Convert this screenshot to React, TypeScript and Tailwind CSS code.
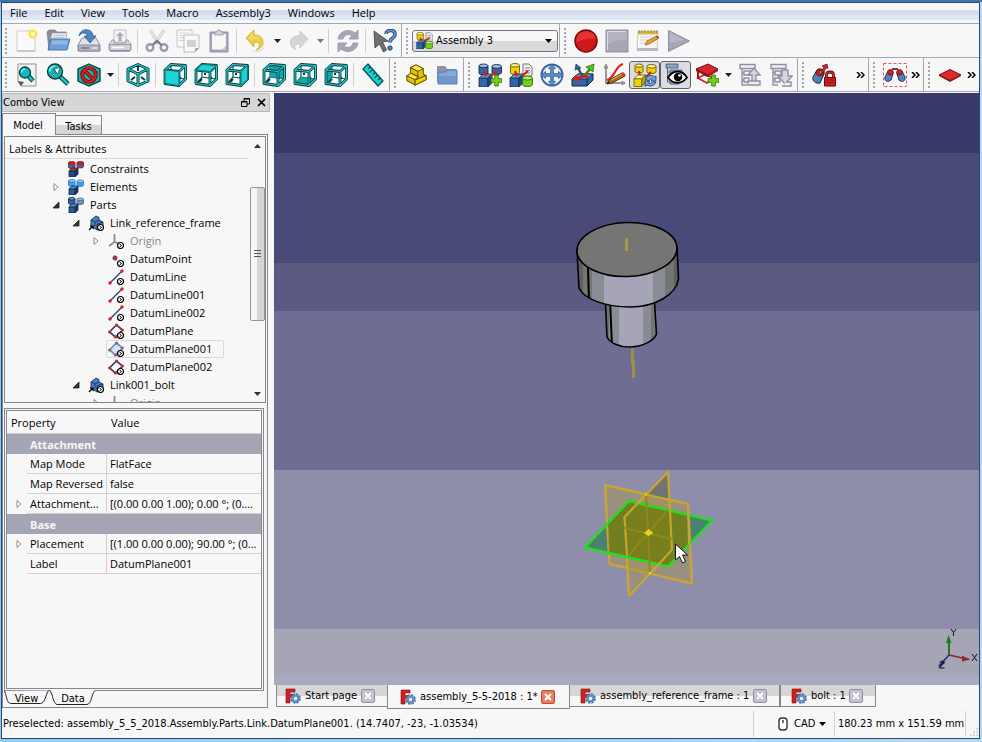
import type { ReactNode } from "react";

const SEGOE = "font-['Open_Sans','Noto_Sans',sans-serif]";
const TAHOMA = "font-['DejaVu_Sans_Condensed','DejaVu_Sans',sans-serif]";

/* ---------- shared icon pieces ---------- */

function Svg({ children, className = "size-6" }: { children: ReactNode; className?: string }) {
  return (
    <svg viewBox="0 0 24 24" className={`${className} shrink-0`} aria-hidden="true">
      {children}
    </svg>
  );
}

function Cyl({ x, y, w, h, fill, top, stroke = "#12294a" }: { x: number; y: number; w: number; h: number; fill: string; top: string; stroke?: string }) {
  const r = w / 2;
  const e = w / 5;
  return (
    <g stroke={stroke} strokeWidth="0.9">
      <path d={`M${x} ${y + e}V${y + h - e}A${r} ${e} 0 0 0 ${x + w} ${y + h - e}V${y + e}Z`} fill={fill} />
      <ellipse cx={x + r} cy={y + e} rx={r} ry={e} fill={top} />
    </g>
  );
}

function Box({ x, y, s, fill, top, side, stroke = "#12294a" }: { x: number; y: number; s: number; fill: string; top: string; side: string; stroke?: string }) {
  const d = s * 0.32;
  return (
    <g stroke={stroke} strokeWidth="0.8" strokeLinejoin="round">
      <path d={`M${x} ${y + d}h${s - d}v${s - d}h${-(s - d)}z`} fill={fill} />
      <path d={`M${x} ${y + d}l${d} ${-d}h${s - d}l${-d} ${d}z`} fill={top} />
      <path d={`M${x + s - d} ${y + d}l${d} ${-d}v${s - d}l${-d} ${d}z`} fill={side} />
    </g>
  );
}

function Plus({ x, y, s = 8 }: { x: number; y: number; s?: number }) {
  const a = s / 3;
  return (
    <path
      d={`M${x + a} ${y}h${a}v${a}h${a}v${a}h${-a}v${a}h${-a}v${-a}h${-a}v${-a}h${a}z`}
      fill="#73d216"
      stroke="#2e6b06"
      strokeWidth="0.8"
    />
  );
}

/* ---------- file toolbar icons ---------- */

const NewIcon = () => (
  <Svg>
    <path d="M2 2h18v20H2z" fill="#fafafa" stroke="#cdcdc8" />
    <path d="M2 22h18" stroke="#a9a9ba" />
    <circle cx="18" cy="5" r="4.6" fill="#f7e64c" />
    <circle cx="18" cy="5" r="2" fill="#fffbd0" />
  </Svg>
);
const OpenIcon = () => (
  <Svg>
    <path d="M1 3l2-2h6l2 2h9v4H5L3 20z" fill="#8a8c99" stroke="#77798a" strokeWidth="0.7" />
    <path d="M6 4h15l-2 10H4z" fill="#e9e9ee" stroke="#a5a5b5" strokeWidth="0.7" />
    <path d="M8 6.500h11M7 8.500h11" stroke="#b7b7c4" strokeWidth="0.8" />
    <path d="M5 10h19l-3 11H2z" fill="#6f9fd6" stroke="#3c6ea9" strokeWidth="0.9" />
    <path d="M6 11.500h16l-1 4H5z" fill="#8fb8e5" />
  </Svg>
);
const SaveIcon = () => (
  <Svg>
    <path d="M5 9h14l4 7v6H1v-6z" fill="#e4e4e8" stroke="#8b8b9d" />
    <path d="M1.500 16h21v6h-21z" fill="#b4b4c2" stroke="#8b8b9d" />
    <path d="M4 19h8" stroke="#7b7b8e" strokeWidth="1.500" />
    <path d="M15 19h5" stroke="#e8e8f0" strokeWidth="1.500" />
    <path d="M2 7C3 2 7 0 11 1c3 .5 5 3 5 6h3l-6 7-6-7h3c0-2-1-3-3-3-2 0-3 1-5 3z" fill="#4f86c0" stroke="#2f6196" strokeWidth="0.8" />
  </Svg>
);
const PrintIcon = () => (
  <Svg>
    <path d="M6 1h12v12H6z" fill="#f4f4f4" stroke="#bdbdc6" />
    <path d="M12 3l4 4h-2.500v5h-3V7H8z" fill="#a9a9ba" />
    <path d="M4 11h2v3h12v-3h2l3 4v6H1v-6z" fill="#dadade" stroke="#9c9cae" />
    <path d="M1.500 15.500h21v6h-21z" fill="#d0d0d8" stroke="#9c9cae" />
    <path d="M4 18.500h12" stroke="#fff" strokeWidth="1.500" />
    <path d="M2 22h20" stroke="#8d8da0" strokeWidth="1.500" />
  </Svg>
);
const CutIcon = () => (
  <Svg>
    <path d="M5 1l9 14M19 1l-9 14" stroke="#c4c4c4" strokeWidth="3" />
    <path d="M5 1l9 14M19 1l-9 14" stroke="#f4f4f4" strokeWidth="1.300" />
    <g fill="none" stroke="#9a9aae" strokeWidth="2.400">
      <circle cx="5" cy="18.500" r="3.300" />
      <circle cx="19" cy="18.500" r="3.300" />
    </g>
    <path d="M7.500 16l4.500-4 4.500 4" fill="none" stroke="#74748a" strokeWidth="2.200" />
  </Svg>
);
const CopyIcon = () => (
  <Svg>
    <path d="M1 1h15v17H1z" fill="#f9f9f9" stroke="#c6c6c6" />
    <path d="M3 4h10M3 6.500h5M3 9h5M3 11.500h5" stroke="#d6d6d6" />
    <path d="M8 6h15v13l-4 4H8z" fill="#f9f9f9" stroke="#bcbcbc" />
    <path d="M11 11h9v7h-9z" fill="#d0d0d0" />
    <path d="M23 19l-4 4v-4z" fill="#a5a5b5" />
  </Svg>
);
const PasteIcon = () => (
  <Svg>
    <path d="M3 3h18v20H3z" fill="#a5a5b8" stroke="#9494aa" />
    <path d="M5 5h14v15.500H5z" fill="#f7f7f7" />
    <path d="M15 20.500l4-4v4z" fill="#c8c8cc" />
    <path d="M8 6V3h2l1-2h2l1 2h2v3z" fill="#d4d4da" stroke="#9494aa" strokeWidth="0.8" />
  </Svg>
);
const UndoIcon = () => (
  <Svg>
    <path d="M7 21c6 2 11 0 13-4 0 4-4 6-8 6z" fill="#d9d9d9" />
    <path d="M2 9l8-8v5c6 0 9 3 9 8 0 3-3 6-7 7 3-2 4-4 3-6-1-2-2-2-5-2v5z" fill="#ecd04a" stroke="#c9a61f" strokeWidth="0.8" strokeLinejoin="round" />
    <path d="M4 9l5-5v3.500c4 0 6 1 7 3-2-1-4-1-7-1v2z" fill="#f3dc62" />
  </Svg>
);
const RedoIcon = () => (
  <Svg>
    <path d="M21 10l-8-8v4.500C6 7 3 10 3.500 14c0 3 2 5 5 7-1-3-1-4 0-5 1-1 2-1 4.500-1v4z" fill="#d4d6d6" stroke="#c3c5c5" strokeWidth="0.8" />
  </Svg>
);
const RefreshIcon = () => (
  <Svg>
    <path d="M2 10C3 4 8 1.500 12 1.500c3 0 5 1 7 2.500l3-3v9h-9l3-3c-4-3-8-1-9 3z" fill="#a5a5b5" stroke="#9595a8" strokeWidth="0.8" />
    <path d="M22 14c-1 6-6 8.500-10 8.500-3 0-5-1-7-2.500l-3 3v-9h9l-3 3c4 3 8 1 9-3z" fill="#a5a5b5" stroke="#9595a8" strokeWidth="0.8" />
  </Svg>
);
const WhatsThisIcon = () => (
  <Svg>
    <path d="M1 2l14 10-5.500 1 4 8-3 2-4-8L2 19z" fill="#6d716c" stroke="#474a47" strokeWidth="0.9" />
    <path d="M13 5c0-3 3-3.500 5-3.500 3 0 4 1.500 4 4 0 4-5 3-5 8" fill="none" stroke="#204a87" strokeWidth="3.600" />
    <path d="M13 5c0-3 3-3.500 5-3.500 3 0 4 1.500 4 4 0 4-5 3-5 8" fill="none" stroke="#6f9bd0" strokeWidth="1.600" />
    <circle cx="17" cy="19" r="2.200" fill="#4d7fb8" stroke="#204a87" />
  </Svg>
);
const AssemblyIcon = ({ plus = false, className }: { plus?: boolean; className?: string }) => (
  <Svg className={className}>
    {plus ? (
      <>
        <Cyl x={1} y={1} w={9} h={11} fill="#3465a4" top="#9dc0e8" />
        <Cyl x={14} y={1.500} w={9.500} h={10} fill="#3465a4" top="#9dc0e8" />
      </>
    ) : (
      <>
        <Cyl x={1.500} y={0.5} w={9} h={11} fill="#edd400" top="#fff29a" stroke="#6b5a00" />
        <path d="M14 1h6l3 3v9h-9z" fill="#f0f0f0" stroke="#777" />
        <path d="M16 5h5M16 7.500h5M16 10h5" stroke="#888" />
      </>
    )}
    <Box x={1} y={11} s={13} fill="#3465a4" top="#5b8cc8" side="#204a87" />
    <path d="M6 8l2 5M19 8l-6 5" stroke="#e01818" strokeWidth="2.200" />
    {plus ? <Plus x={13} y={12} s={11} /> : <Cyl x={13.500} y={13} w={10} h={10.500} fill="#73d216" top="#b4f06a" stroke="#2e6b06" />}
  </Svg>
);
const RecordIcon = () => (
  <Svg>
    <circle cx="12" cy="12" r="11" fill="#d01818" stroke="#7d0a0a" strokeWidth="1.500" />
    <path d="M2.500 13C2 6 6 2.500 12 2.500S21.500 6 21.500 10c-7-1-13 0-19 3z" fill="#e63232" />
  </Svg>
);
const StopIcon = () => (
  <Svg>
    <path d="M1 1h22v22H1z" fill="#a5a5b5" stroke="#8f8fa3" />
    <path d="M2.500 2.500h19V11c-8 0-13 1-19 4z" fill="#b3b3c1" />
    <path d="M2.500 21V2.500H21" fill="none" stroke="#dcdce4" />
  </Svg>
);
const MacroEditIcon = () => (
  <Svg>
    <path d="M2 3h20l-1 17H1z" fill="#f6f6f2" stroke="#c5c5c0" />
    <path d="M1 19h21v3H1z" fill="#b9b9c6" />
    <path d="M2 2h20v3.500H2z" fill="#d8bb53" />
    <path d="M3 1v3M6 1v3M9 1v3M12 1v3M15 1v3M18 1v3M21 1v3" stroke="#8f7b2c" strokeWidth="0.9" />
    <path d="M4 8h14M4 11h12M4 14h8" stroke="#cfcfd0" />
    <path d="M9 16l2-4 10-5 2 2-10 6z" fill="#e7a52c" stroke="#94661b" strokeWidth="0.8" />
    <path d="M19.500 7.500l2-1 1.500 2-1.500 1z" fill="#dd2c2c" />
  </Svg>
);
const PlayIcon = () => (
  <Svg>
    <path d="M1.500 1.500v21L22.500 12z" fill="#a5a5b5" stroke="#8f8fa3" />
    <path d="M2.500 14V3l15 8z" fill="#b6b6c4" />
  </Svg>
);

/* ---------- view toolbar icons ---------- */

const lens = (cx: number, cy: number, r: number, hx: number, hy: number) => (
  <>
    <path d={`M${cx + r * 0.7} ${cy + r * 0.7}L${hx} ${hy}`} stroke="#043b3c" strokeWidth="4.600" />
    <path d={`M${cx + r * 0.7} ${cy + r * 0.7}L${hx} ${hy}`} stroke="#16c4c6" strokeWidth="2.600" />
    <circle cx={cx} cy={cy} r={r} fill="#12b8bb" stroke="#043b3c" strokeWidth="1.300" />
    <path d={`M${cx - r + 2} ${cy}A${r - 2} ${r - 2} 0 0 1 ${cx} ${cy - r + 2}`} stroke="#8df2f2" strokeWidth="1.600" fill="none" />
  </>
);
const FitAllIcon = () => (
  <Svg>
    <path d="M3 1h18v22H6l-3-4z" fill="#f3f3f1" stroke="#8f918d" />
    <path d="M3 18l6 1-3 4z" fill="#555753" />
    {lens(10, 9.500, 5.500, 18, 18)}
  </Svg>
);
const FitSelIcon = () => (
  <Svg>
    {lens(9, 8.500, 7.500, 22, 21)}
    <path d="M5 13l5-5-3-1 7-3-2 7-2-2-4 5z" fill="#fff" stroke="#0b4c4d" strokeWidth="0.7" />
  </Svg>
);
const DrawStyleIcon = () => (
  <Svg>
    <path d="M12 1l11 5v12l-11 5L1 18V6z" fill="#15b4b6" stroke="#043b3c" strokeWidth="1.300" />
    <circle cx="12" cy="12" r="6.800" fill="none" stroke="#5e0707" strokeWidth="3.800" />
    <path d="M7.500 7.500l9 9" stroke="#5e0707" strokeWidth="3.800" />
    <circle cx="12" cy="12" r="6.800" fill="none" stroke="#dd1d1d" strokeWidth="2.200" />
    <path d="M7.500 7.500l9 9" stroke="#dd1d1d" strokeWidth="2.200" />
  </Svg>
);
const AxoIcon = () => (
  <Svg>
    <path d="M12 1l10.500 5v12L12 23 1.500 18V6z" fill="#f6fbfb" />
    <g fill="none" strokeLinejoin="round">
      <path d="M12 1.500l10 4.500v12l-10 4.500L2 18V6zM2 6l10 5 10-5M12 11v11" stroke="#04393a" strokeWidth="3" />
      <path d="M12 1.500l10 4.500v12l-10 4.500L2 18V6zM2 6l10 5 10-5M12 11v11" stroke="#1fd0d2" strokeWidth="1.300" />
    </g>
    <path d="M5 17l4-3M19 17l-4-3M12 4v4" stroke="#04393a" strokeWidth="1.800" />
  </Svg>
);
const FACES: Record<string, string> = {
  front: "M2 7L16 8.500V22.500L2 20.500Z",
  top: "M2 7L8 1.500L22.500 2.500L16 8.500Z",
  right: "M16 8.500L22.500 2.500V16L16 22.500Z",
  rear: "M8 1.500L22.500 2.500V16L8 14Z",
  bottom: "M2 20.500L8 14L22.500 16L16 22.500Z",
  left: "M2 7L8 1.500V14L2 20.500Z",
};
const EDGES = "M2 7L16 8.500V22.500L2 20.500ZM2 7L8 1.500L22.500 2.500L16 8.500M22.500 2.500V16L16 22.500";
const CubeIcon = ({ face }: { face: string }) => {
  const hidden = face === "rear" || face === "bottom" || face === "left";
  return (
    <Svg>
      <path d="M2 7L8 1.500L22.500 2.500V16L16 22.500L2 20.500Z" fill="#f4fafa" />
      <path d="M8 2v12l14 2M8 14l-5 6" fill="none" stroke="#0a5758" strokeWidth="1.200" />
      <path d="M8 16l-3 3M11 12v-2M15 14l3 1" stroke="#04393a" strokeWidth="2" />
      {hidden && <path d={FACES[face]} fill="#12a8aa" />}
      <path d={EDGES} fill="none" stroke="#04393a" strokeWidth="2.800" strokeLinejoin="round" />
      <path d={EDGES} fill="none" stroke="#25cfd1" strokeWidth="1.100" strokeLinejoin="round" />
      {!hidden && <path d={FACES[face]} fill="#1ed3d6" stroke="#0a6a6b" strokeWidth="0.9" />}
    </Svg>
  );
};
const RulerIcon = () => (
  <Svg>
    <path d="M2 6l5-5 15 17-5 5z" fill="#1ccfd2" stroke="#055253" strokeWidth="1.300" strokeLinejoin="round" />
    <path d="M9 4l-2 2M11.500 6.500l-3 3M14 9.500l-2 2M16.500 12l-3 3M19 15l-2 2" stroke="#055253" strokeWidth="1.100" />
  </Svg>
);
const PartIcon = () => (
  <Svg className="size-[22px]">
    <g stroke="#6b5a00" strokeWidth="1.100" strokeLinejoin="round">
      <path d="M6 4l6-3 8 4v6l3 2v4l-12 6-9-5v-5l4-2z" fill="#e0c400" />
      <path d="M6 4l6-3 8 4-6 3z" fill="#fce94f" />
      <path d="M2 13l5-3 8 4-4 3z" fill="#fce94f" />
      <path d="M6 4v6l8 4V8zM20 11l3 2-12 5v5" fill="none" />
      <path d="M11 17.500l12-5V17l-12 6z" fill="#edd400" />
    </g>
  </Svg>
);
const GroupIcon = () => (
  <Svg>
    <path d="M2 3h8l2 3h9v13H2z" fill="#8d93a3" />
    <path d="M3 21V9h7l2-2h10v14z" fill="#7099ca" stroke="#5a84b6" />
    <path d="M4 10h7l2-2h8v5H4z" fill="#84aad8" />
  </Svg>
);
const MoveIcon = () => (
  <Svg>
    <circle cx="12" cy="12" r="10.500" fill="#eef3fa" stroke="#3b69a5" strokeWidth="2" />
    <path d="M12 1.500l3.500 4H13.300v5.200h5.200V8.500l4 3.500-4 3.500v-2.200h-5.200v5.200h2.200L12 22.500l-3.500-4h2.200v-5.200H5.500v2.200l-4-3.500 4-3.500v2.200h5.200V5.500H8.500z" fill="#5f8fca" stroke="#2b558f" strokeWidth="0.800" />
  </Svg>
);
const AxialIcon = () => (
  <Svg>
    <path d="M1 16l6-5h15v6l-6 6H1z" fill="#3465a4" stroke="#12294a" />
    <path d="M1 16l6-5h15l-6 5z" fill="#6b98d0" stroke="#12294a" strokeWidth="0.800" />
    <path d="M16 16v7" stroke="#12294a" />
    <path d="M12 14L7 5" stroke="#204a87" strokeWidth="2.200" />
    <path d="M4 7l1-6 5 4z" fill="#3465a4" stroke="#12294a" strokeWidth="0.600" />
    <path d="M12 14l8-9" stroke="#3a8a10" strokeWidth="2.600" />
    <path d="M15 4l8-3-1 8z" fill="#5ac018" stroke="#1f5a04" strokeWidth="0.700" />
    <path d="M13 13l-9 3M13 13l4 1" stroke="#e01818" strokeWidth="2.400" />
    <path d="M6 12l-5 5 7 1z" fill="#e01818" />
  </Svg>
);
const TraceIcon = () => (
  <Svg>
    <path d="M4 2v18h19" stroke="#777a7d" strokeWidth="1.500" fill="none" />
    <path d="M2 5l2-4 2 4zM20 18l3 2-3 2z" fill="#aaa" stroke="#666" strokeWidth="0.600" />
    <path d="M5 17c8-2 8-14 16-16" stroke="#dd1d1d" strokeWidth="2.200" fill="none" />
    <path d="M5 21l2-4 13-7 3 3L10 20z" fill="#a9701c" stroke="#4e330a" strokeWidth="1" />
    <path d="M9 17l11-6" stroke="#dba24e" strokeWidth="1.200" />
    <path d="M5 21l1-3 2 2z" fill="#222" />
    <path d="M19 10.500l2-1.500 3 3-2 1.500z" fill="#c33" />
  </Svg>
);
const AutoRecomputeIcon = () => (
  <Svg>
    <Cyl x={2} y={1} w={8} h={9} fill="#edd400" top="#fff29a" stroke="#6b5a00" />
    <Cyl x={14} y={1.500} w={9} h={9} fill="#edd400" top="#fff29a" stroke="#6b5a00" />
    <path d="M6 8l1 6M18 9l-6 6" stroke="#e01818" strokeWidth="1.900" />
    <Box x={1} y={12} s={11.500} fill="#edd400" top="#fff29a" side="#c4a000" stroke="#6b5a00" />
    <path d="M12.500 16c1-4 7-5 9-2l1.500-1v5h-5l1.500-1.500c-2-1-3 0-4 1.500z" fill="#729fcf" stroke="#204a87" strokeWidth="0.900" />
    <path d="M23 19c-1 4-7 5-9 3l-2 1.500V18h5l-1.500 2c2 1 3 0 4-1z" fill="#729fcf" stroke="#204a87" strokeWidth="0.900" />
  </Svg>
);
const SmartRecomputeIcon = () => (
  <Svg>
    <path d="M2 1h12v4H2zM6 7h12v4H6zM6 14h9v7H6z" fill="#8da5c4" stroke="#4a5f80" strokeWidth="0.900" />
    <path d="M3.500 5v14H6M3.500 9H6" stroke="#4a5f80" fill="none" />
    <path d="M4 14.500c5-8 14-8 19 0-5 7-14 7-19 0z" fill="#fff" stroke="#000" strokeWidth="1.800" />
    <circle cx="14" cy="14" r="4.300" />
    <circle cx="15.500" cy="12.500" r="1.300" fill="#fff" />
  </Svg>
);
const WorkplaneIcon = () => (
  <Svg>
    <path d="M3 15l6-3 10 3-7 5z" fill="#fff" stroke="#c22" strokeWidth="1.800" />
    <path d="M3 8v8" stroke="#a11" strokeWidth="2" />
    <path d="M1 6l12-5 10 5-10 6z" fill="#d9262b" stroke="#5e0b0d" strokeWidth="0.900" />
    <path d="M1 6v2l12 6V12z" fill="#8d1216" />
    <path d="M13 12v2l10-6V6z" fill="#a8171b" />
    <Plus x={13} y={12} s={11} />
  </Svg>
);
const TreeArrowIcon = ({ down = false }: { down?: boolean }) => (
  <Svg>
    <g fill="#f0f0f4" stroke="#8f8fa3" strokeWidth="1.400">
      <path d="M2 1.500h15v4H2zM6 8h6v4H6zM6 15h5v4H6z" />
      <path d="M4 6v16h5M4 10h2M4 17h2" fill="none" />
      {down ? <path d="M13 7h6v6h4l-7 8-7-8h4z" fill="#d6d6de" /> : <path d="M14 20v-8h-4l6-7 6 7h-4v8z" fill="#d6d6de" />}
      {down ? <path d="M17 19h5v4h-9" /> : <path d="M10 18h12v4H10z" />}
    </g>
  </Svg>
);
const LockIcon = () => (
  <Svg>
    <path d="M1 14l4-7 7 4-4 9c-4 1-8-2-7-6z" fill="#4e82bd" stroke="#12294a" />
    <path d="M5 7c2-3 9 0 7 4l-3 2c-4 0-6-2-4-6z" fill="#d61f1f" stroke="#5e0b0d" strokeWidth="0.900" />
    <circle cx="9" cy="9" r="2" fill="#8cb4e0" stroke="#5e0b0d" />
    <path d="M9 9l3-5-2-1 5-2 1 4-2 0-3 5z" fill="#d61f1f" stroke="#5e0b0d" strokeWidth="0.700" />
    <path d="M14.500 15v-3c0-4 7-4 7 0v3" fill="none" stroke="#5e0b0d" strokeWidth="2.800" />
    <path d="M14.500 15v-3c0-4 7-4 7 0v3" fill="none" stroke="#e33" strokeWidth="1.200" />
    <path d="M12.500 14.500h11v8.500h-11z" fill="#d61f1f" stroke="#5e0b0d" />
    <path d="M14 17h8M14 19.500h8" stroke="#8d1216" />
  </Svg>
);
const CoincidentIcon = () => (
  <Svg>
    <path d="M0.500 0.500h23v23h-23z" fill="none" stroke="#f05050" strokeDasharray="3 2" />
    <path d="M2 14l3-6 5 3-2 6c-3 3-7 1-6-3zM22 14l-3-6-5 3 2 6c3 3 7 1 6-3z" fill="#4e82bd" stroke="#12294a" strokeWidth="0.900" />
    <path d="M5 8c1-3 7-1 5 3l-2 1c-3 0-4-2-3-4zM19 8c-1-3-7-1-5 3l2 1c3 0 4-2 3-4z" fill="#d61f1f" stroke="#5e0b0d" strokeWidth="0.800" />
    <path d="M9 6h6" stroke="#5e0b0d" strokeWidth="1.600" />
  </Svg>
);
const RedPlaneIcon = () => (
  <Svg>
    <path d="M1 12l11-5.500L23 12l-11 5.500z" fill="#e02a2a" stroke="#6d0b0b" />
    <path d="M1 12l11 5.500L23 12v1l-11 6L1 13z" fill="#8d1216" />
  </Svg>
);

/* ---------- toolbar parts ---------- */

function Group({ children, className = "pl-1" }: { children: ReactNode; className?: string }) {
  return (
    <div role="toolbar" className={`flex h-full shrink-0 items-center border-[#a5a5b5] pr-px not-last:border-r ${className}`}>
      <span className="mr-1 h-[26px] w-[2px] shrink-0 bg-[repeating-linear-gradient(to_bottom,#a5a5b5_0px,#a5a5b5_2px,transparent_2px,transparent_4px)]" />
      {children}
    </div>
  );
}
function Tool({ label, children, pressed }: { label: string; children: ReactNode; pressed?: boolean }) {
  return (
    <button
      type="button"
      aria-label={label}
      aria-pressed={pressed}
      className={`flex h-7 w-[31px] shrink-0 items-center justify-center rounded-[3px] ${pressed ? "border border-[#5f6068] bg-[#dcdce0]" : ""}`}
    >
      {children}
    </button>
  );
}
function Caret({ label, faded }: { label: string; faded?: boolean }) {
  return (
    <button type="button" aria-label={label} className="flex h-7 w-3 shrink-0 items-center justify-center">
      <svg viewBox="0 0 7 4" className="h-1 w-[7px]">
        <path d="M0 0h7L3.500 4z" fill={faded ? "#777" : "#222"} />
      </svg>
    </button>
  );
}
const Sep = () => <span className="mr-[3px] ml-[2px] h-6 w-px shrink-0 bg-[#d0d0d0]" />;
function More({ label }: { label: string }) {
  return (
    <button type="button" aria-label={label} className="mr-px ml-auto flex h-7 w-[10px] items-center">
      <svg viewBox="0 0 9 6" className="h-[6px] w-[9px]">
        <path d="M1 0l3 3-3 3M5 0l3 3-3 3" fill="none" stroke="#000" strokeWidth="1.500" />
      </svg>
    </button>
  );
}

/* ---------- tree ---------- */

const badge = (
  <>
    <circle cx="12.500" cy="12.500" r="3" fill="#fff" stroke="#000" strokeWidth="1.200" />
    <path d="M11.500 11l2 1.500-2 1.500" fill="none" stroke="#000" />
  </>
);
function TreeIcon({ kind }: { kind: string }) {
  return (
    <svg viewBox="0 0 16 16" className="size-4 shrink-0" aria-hidden="true">
      {kind === "constraints" && (
        <>
          <Cyl x={0.5} y={0.5} w={6.500} h={7} fill="#3465a4" top="#c22" stroke="#b01515" />
          <Cyl x={9} y={0.5} w={6.500} h={6.500} fill="#3465a4" top="#c22" stroke="#b01515" />
          <Box x={1} y={7} s={9} fill="#204a87" top="#d22" side="#163560" />
        </>
      )}
      {kind === "elements" && (
        <>
          <Cyl x={0.5} y={0.5} w={6.500} h={7} fill="#3aa0f5" top="#8fd0ff" stroke="#3a7fc0" />
          <Cyl x={9} y={1} w={6.500} h={6.500} fill="#3aa0f5" top="#8fd0ff" stroke="#3a7fc0" />
          <Box x={1} y={7} s={9} fill="#2a5a96" top="#5b8cc8" side="#163560" />
        </>
      )}
      {kind === "parts" && (
        <>
          <Cyl x={0.5} y={0.5} w={6.500} h={7} fill="#3465a4" top="#6d9bd0" />
          <Cyl x={9} y={1} w={6.500} h={6.500} fill="#6f94c2" top="#a7c2e2" stroke="#476b97" />
          <Box x={1} y={7} s={9} fill="#2a5a96" top="#5b8cc8" side="#163560" />
        </>
      )}
      {kind === "link" && (
        <>
          <path d="M3 5l5-4 3 1.500V5l4 2v5l-6 3-6-4z" fill="#4a7cb6" stroke="#163560" strokeWidth="0.900" />
          <path d="M3 5l4 2v4M7 7l4-2M9 9v6M9 9l6-2" fill="none" stroke="#163560" strokeWidth="0.900" />
          <path d="M0 10h6v6H0z" fill="#fff" />
          <path d="M1 15l4-4M2 11h3.200v3.200" fill="none" stroke="#000" strokeWidth="1.300" />
          {badge}
        </>
      )}
      {kind === "origin" && (
        <>
          <path d="M6.500 1v8L1 13M6.500 9l6 2" fill="none" stroke="#8a8c99" strokeWidth="1.800" />
          {badge}
        </>
      )}
      {kind === "point" && (
        <>
          <circle cx="7" cy="7" r="2.200" fill="#c22233" stroke="#4a5f80" strokeWidth="0.800" />
          {badge}
        </>
      )}
      {kind === "line" && (
        <>
          <path d="M2 14L14 2" stroke="#2d4a78" strokeWidth="1.500" />
          <circle cx="2" cy="14" r="1.700" fill="#d22" />
          <circle cx="14" cy="2" r="1.700" fill="#d22" />
          {badge}
        </>
      )}
      {kind.startsWith("plane") && (
        <>
          <path d="M8.500 2L14.500 7 7.500 14 1.500 9z" fill={kind === "plane-hot" ? "#d9e6f7" : "#fff"} stroke={kind === "plane-hot" ? "#6f93c0" : "#2d4a78"} strokeWidth="1.700" />
          <g fill={kind === "plane-hot" ? "#a05a78" : "#d22"}>
            <circle cx="8.500" cy="2" r="1.600" />
            <circle cx="14.300" cy="7" r="1.600" />
            <circle cx="7.500" cy="14" r="1.600" />
            <circle cx="1.700" cy="9" r="1.600" />
          </g>
          {badge}
        </>
      )}
    </svg>
  );
}
function Twisty({ open }: { open: boolean }) {
  return (
    <svg viewBox="0 0 8 8" className="size-2" aria-hidden="true">
      {open ? <path d="M7 1v6H1z" fill="#333" stroke="#222" strokeWidth="0.800" /> : <path d="M2 0.500v7l4-3.500z" fill="#fff" stroke="#8a8a8a" />}
    </svg>
  );
}
type Node = { label: string; icon: string; indent: string; open?: boolean; dim?: boolean; hot?: boolean };
const L1 = "pl-[47px]";
const L2 = "pl-[67px]";
const L3 = "pl-[87px]";
const NODES: Node[] = [
  { label: "Constraints", icon: "constraints", indent: L1 },
  { label: "Elements", icon: "elements", indent: L1, open: false },
  { label: "Parts", icon: "parts", indent: L1, open: true },
  { label: "Link_reference_frame", icon: "link", indent: L2, open: true },
  { label: "Origin", icon: "origin", indent: L3, open: false, dim: true },
  { label: "DatumPoint", icon: "point", indent: L3 },
  { label: "DatumLine", icon: "line", indent: L3 },
  { label: "DatumLine001", icon: "line", indent: L3 },
  { label: "DatumLine002", icon: "line", indent: L3 },
  { label: "DatumPlane", icon: "plane", indent: L3 },
  { label: "DatumPlane001", icon: "plane-hot", indent: L3, hot: true },
  { label: "DatumPlane002", icon: "plane", indent: L3 },
  { label: "Link001_bolt", icon: "link", indent: L2, open: true },
  { label: "Origin", icon: "origin", indent: L3, open: false, dim: true },
];

/* ---------- properties ---------- */

type Prop = { name: string; value?: string; expandable?: boolean };
const PROPS: Prop[] = [
  { name: "Attachment" },
  { name: "Map Mode", value: "FlatFace" },
  { name: "Map Reversed", value: "false" },
  { name: "Attachment...", value: "[(0.00 0.00 1.00); 0.00 °; (0....", expandable: true },
  { name: "Base" },
  { name: "Placement", value: "[(1.00 0.00 0.00); 90.00 °; (0...", expandable: true },
  { name: "Label", value: "DatumPlane001" },
];

function PropertyTable() {
  return (
    <table className={`w-full table-fixed border-separate border-spacing-0 text-[11px] leading-[19px] ${SEGOE}`}>
      <colgroup>
        <col className="w-5" />
        <col className="w-20" />
        <col />
      </colgroup>
      <thead>
        <tr className="h-[23px] text-left">
          <th colSpan={2} className="border-b border-[#d0d0d0] pl-1 font-normal">Property</th>
          <th className="border-b border-[#d0d0d0] pl-1 font-normal">Value</th>
        </tr>
      </thead>
      <tbody>
        {PROPS.map((p) =>
          p.value === undefined ? (
            <tr key={p.name} className="h-5 bg-[#a5a5b5] text-left text-[#f7f7f7]">
              <td />
              <th colSpan={2} className="pl-[3px] font-bold">{p.name}</th>
            </tr>
          ) : (
            <tr key={p.name} className="h-5 whitespace-nowrap">
              <td className="pl-2">{p.expandable && <Twisty open={false} />}</td>
              <td className="border-r border-b border-[#d0d0d0] pl-[3px]">{p.name}</td>
              <td className="border-b border-[#d0d0d0] pl-[3px]">{p.value}</td>
            </tr>
          ),
        )}
      </tbody>
    </table>
  );
}

function SidePanel() {
  return (
    <aside className="flex w-[268px] shrink-0 flex-col pb-px">
      <header className={`flex h-[19px] items-center border border-[#b9b9bb] bg-[#d6d6d6] text-[11px] ${TAHOMA}`}>
        <h2 className="flex-1 pt-[2px]">Combo View</h2>
        <button type="button" aria-label="Float panel" className="flex w-4 justify-center">
          <svg viewBox="0 0 9 9" className="size-[9px]">
            <path d="M3 3V.5h5.500V6H6M3 1h5.500M.5 3.500H6v5H.5zM.5 4H6" fill="none" stroke="#000" />
          </svg>
        </button>
        <button type="button" aria-label="Close panel" className="flex w-4 justify-center">
          <svg viewBox="0 0 9 9" className="size-[9px]">
            <path d="M1 1l7 7M8 1L1 8" stroke="#000" strokeWidth="1.700" />
          </svg>
        </button>
      </header>

      <div role="tablist" className={`mt-px flex items-end text-[11px] ${TAHOMA}`}>
        <button type="button" role="tab" aria-selected="true" className="z-10 -mb-px h-[22px] w-[54px] border border-b-0 border-[#85868f] bg-[#f7f7f7] pt-[3px] pr-[2px]">
          Model
        </button>
        <button type="button" role="tab" aria-selected="false" className="h-[19px] w-[46px] border border-b-0 border-l-0 border-[#85868f] bg-linear-to-b from-[#f7f7f7] from-50% to-[#d6d6d6] to-50% pt-[3px]">
          Tasks
        </button>
      </div>

      <div className="mr-[2px] flex min-h-0 flex-1 flex-col border border-[#85868f] pt-px pr-px pl-px">
        <section aria-label="Model tree" className={`flex h-[267px] shrink-0 border border-[#85868f] text-[11px] ${SEGOE}`}>
          <div className="flex min-w-0 flex-1 flex-col overflow-hidden">
            <div className="mb-px h-[22px] shrink-0 border-b border-[#d9d9dc] pl-1 leading-[23px]">Labels &amp; Attributes</div>
            <ul role="tree" aria-label="Labels and Attributes" className="min-h-0 flex-1 overflow-hidden">
              {NODES.map((n, i) => (
                <li key={i} role="treeitem" aria-expanded={n.open} className={`flex h-[18px] items-center leading-[18px] ${n.indent}`}>
                  <span className="w-[14px] shrink-0">{n.open !== undefined && <Twisty open={n.open} />}</span>
                  <span className={`flex h-[18px] items-center gap-[6px] pr-3 pl-[2px] ${n.hot ? "rounded-[2px] ring-1 ring-[#dadada] ring-inset" : ""}`}>
                    <TreeIcon kind={n.icon} />
                    <span className={n.dim ? "text-[#858585]" : ""}>{n.label}</span>
                  </span>
                </li>
              ))}
            </ul>
          </div>
          <div className="flex w-4 shrink-0 flex-col items-center pt-[7px] pb-[6px]">
            <button type="button" aria-label="Scroll up">
              <svg viewBox="0 0 7 4" className="h-1 w-[7px]"><path d="M0 4h7L3.500 0z" fill="#333" /></svg>
            </button>
            <div className="mt-[39px] flex h-[134px] w-[15px] items-center justify-center rounded-[2px] border border-[#95959c] bg-linear-to-r from-[#f7f7f7] from-50% to-[#d6d6d6] to-50%">
              <span className="h-[9px] w-[7px] bg-[repeating-linear-gradient(to_bottom,#555_0px,#555_1px,transparent_1px,transparent_3px)]" />
            </div>
            <button type="button" aria-label="Scroll down" className="mt-auto">
              <svg viewBox="0 0 7 4" className="h-1 w-[7px]"><path d="M0 0h7L3.500 4z" fill="#333" /></svg>
            </button>
          </div>
        </section>

        <section aria-label="Properties" className="mt-[5px] mr-[2px] flex min-h-0 flex-1 flex-col border border-[#85868f] p-px">
          <div className="flex-1 border border-[#85868f]">
            <PropertyTable />
          </div>
        </section>

        <div role="tablist" className={`relative -mt-px flex h-[17px] shrink-0 text-[11px] leading-[13px] ${TAHOMA}`}>
          <svg viewBox="0 0 94 16" className="absolute top-0 left-0 h-4 w-[94px]" aria-hidden="true">
            <path d="M46 .5h45" stroke="#f7f7f7" />
            <path d="M.5 1c2 4 2 12 6 12.500h30c5-.5 5-9 8-13M46 .5c3 4 3 13 7 14h30c5-1 4-10 8-14" fill="#f7f7f7" stroke="#222" />
          </svg>
          <button type="button" role="tab" aria-selected="false" className="relative w-[45px]">View</button>
          <button type="button" role="tab" aria-selected="true" className="relative w-[48px]">Data</button>
        </div>
      </div>
    </aside>
  );
}

/* ---------- 3D view ---------- */

function Viewport() {
  return (
    <div className="relative min-h-0 flex-1 overflow-hidden">
      <div className="flex h-full flex-col" aria-hidden="true">
        <div className="grow-[60] bg-[#393969]" />
        <div className="grow-[110] bg-[#4a4a78]" />
        <div className="grow-[48] bg-[#5a5a82]" />
        <div className="grow-[159] bg-[#6e6e94]" />
        <div className="grow-[159] bg-[#8e8eab]" />
        <div className="grow-[47] bg-[#a5a5b5]" />
        <div className="grow-[9] bg-[#a9a9c1]" />
      </div>
      <svg viewBox="274 93 705 592" className="absolute inset-0 size-full" role="img" aria-label="Bolt and datum planes">
        <defs>
          <clipPath id="shaft">
            <path d="M605.500 300L607 337C610 343 619 347 629 347C642 347 654 341 656.500 334L654.500 300Z" />
          </clipPath>
          <clipPath id="head">
            <path d="M577 250L579 288C584 299 605 307 630 307C655 307 676 295 678.500 279L677 246Z" />
          </clipPath>
        </defs>
        <g clipPath="url(#shaft)">
          <rect x="604" y="298" width="54" height="52" fill="#8a8c94" />
          <rect x="604" y="298" width="5" height="52" fill="#6d6f74" />
          <rect x="619" y="298" width="24" height="52" fill="#a5a5b7" />
          <rect x="651" y="298" width="8" height="52" fill="#757573" />
          <path d="M610 300L612 346" stroke="#000" strokeWidth="2" />
        </g>
        <path d="M605.500 304L607 337C610 343 619 347 629 347C642 347 654 341 656.500 334L654.500 302" fill="none" stroke="#000" strokeWidth="1.600" />
        <g clipPath="url(#head)">
          <rect x="574" y="240" width="107" height="70" fill="#8a8c94" />
          <rect x="574" y="240" width="9" height="70" fill="#5f6065" />
          <rect x="583" y="240" width="9" height="70" fill="#757573" />
          <rect x="604" y="240" width="49" height="70" fill="#a5a5b7" />
          <rect x="665" y="240" width="9" height="70" fill="#757573" />
          <rect x="674" y="240" width="7" height="70" fill="#5f6062" />
          <path d="M588 266L589 302" stroke="#000" strokeWidth="2" />
        </g>
        <path d="M577 250L579 288C584 299 605 307 630 307C655 307 676 295 678.500 279L677 246" fill="none" stroke="#000" strokeWidth="1.600" />
        <ellipse cx="627" cy="249.500" rx="50" ry="27" transform="rotate(-2 627 249.500)" fill="#757573" stroke="#000" strokeWidth="1.600" />
        <path d="M626.500 238v13" stroke="#a8974a" strokeWidth="3" />
        <path d="M632.500 348v15l1 0v15" fill="none" stroke="#a08f42" strokeWidth="3" />

        <path d="M629 501L712 520.500L668 566.500L585 547.500Z" fill="#2f7c58" fillOpacity="0.700" />
        <g fill="#a8924a" fillOpacity="0.450" stroke="#c8a53a" strokeWidth="2.400" strokeLinejoin="round">
          <path d="M605 485L688 504L692 583.500L609.500 564Z" />
          <path d="M668 472L672 550L629 596L624.500 517Z" />
        </g>
        <path d="M668 474L669.500 499L647 494Z" fill="#66676e" fillOpacity="0.700" />
        <path d="M608 522L629 501L687 515L689 544L668 566.500L609 553Z" fill="#6e7800" fillOpacity="0.650" />
        <path d="M629 501L712 520.500L668 566.500L585 547.500Z" fill="none" stroke="#20e01c" strokeWidth="2.400" />
        <path d="M606 510L605 485L688 504L689 545M624.500 519V517L668 472L672 550L657 566M624.500 517L627 556" fill="none" stroke="#c4a630" strokeWidth="2" />
        <path d="M646 494L650 573M624 528L672 539M668 510L629 555" stroke="#8c8a18" strokeWidth="2" />
        <path d="M644 533l4.500-4 5 4-5 3z" fill="#f0d018" />
        <path d="M646 493.500v2M650 572v2" stroke="#f0d018" strokeWidth="2" />
        <path d="M675.500 544v16l4-3.500 3 6.500 3-1.500-3-6.500h5z" fill="#fff" stroke="#111" />
      </svg>
      <svg viewBox="930 625 49 60" className="absolute right-0 bottom-0 h-[60px] w-[49px]" role="img" aria-label="Axis cross">
        <path d="M949 655V638" stroke="#1d7a1d" strokeWidth="2" />
        <path d="M946 643l2.500-8 3 8z" fill="#1d7a1d" />
        <path d="M949 655l20 4.500" stroke="#8b2a30" strokeWidth="1.600" />
        <path d="M962 655.500l8 4-8 2z" fill="#8b2a30" />
        <path d="M949 655l-10 11" stroke="#2a2a8b" strokeWidth="1.600" />
        <path d="M942 660l3 3-7 5z" fill="#2a2a8b" />
        <g stroke="#111" strokeWidth="1" fill="none">
          <path d="M951 629l2.500 3.500V636M956 629l-2.500 3.500" />
          <path d="M972 654l5 7M977 654l-5 7" />
          <path d="M939.500 662h5l-5 6h5" />
        </g>
      </svg>
    </div>
  );
}

function DocTab({ title, active, className }: { title: string; active?: boolean; className: string }) {
  return (
    <div
      role="tab"
      aria-selected={!!active}
      className={`flex shrink-0 items-center border border-t-0 border-[#85868f] ${
        active ? "h-6 bg-[#f7f7f7]" : "h-[22px] bg-linear-to-b from-[#d6d6d6] from-50% to-[#f7f7f7] to-50%"
      } ${className}`}
    >
      <svg viewBox="0 0 16 16" className="mr-1 size-4 shrink-0" aria-hidden="true">
        <path d="M1 1h9v3H5v2.500h4v3H5V15H1z" fill="#d61f1f" stroke="#7d0a0a" strokeWidth="0.600" />
        <circle cx="10.500" cy="10.500" r="3.600" fill="none" stroke="#3f6ca6" strokeWidth="3.400" strokeDasharray="1.900 0.900" />
        <circle cx="10.500" cy="10.500" r="2.900" fill="none" stroke="#5f8ec6" strokeWidth="2.200" />
        <circle cx="10.500" cy="10.500" r="1.500" fill="#f2f2f2" />
      </svg>
      <span className="pt-[2px] whitespace-nowrap">{title}</span>
      <button
        type="button"
        aria-label={`Close ${title}`}
        className={`ml-auto flex size-[14px] items-center justify-center rounded-[2px] border ${active ? "border-[#c9472e] bg-[#e2805f]" : "border-[#8f8f9f] bg-[#c3c3ce]"}`}
      >
        <svg viewBox="0 0 8 8" className="size-2">
          <path d="M1 1l6 6M7 1L1 7" stroke="#fff" strokeWidth="2" />
        </svg>
      </button>
    </div>
  );
}

export default function App() {
  return (
    <div className="flex h-screen w-full border-t-2 border-[#3f74ad] bg-linear-to-r from-[#8fcdf2] to-[#b4d8f2] pr-[2px] pb-[3px] pl-px text-black">
      <div className="flex min-w-0 flex-1 flex-col border border-[#274a74] bg-[#f7f7f7]">
        <nav className={`flex h-[21px] shrink-0 gap-px border-b border-[#a5a5b5] bg-[linear-gradient(to_bottom,#f7f7f7_7px,#d6dded_7px,#d6dded_12px,#dee7f5_12px,#dee7f5_17px,#f7f7f7_17px)] text-[11px] leading-5 ${SEGOE}`}>
          {["File", "Edit", "View", "Tools", "Macro", "Assembly3", "Windows", "Help"].map((m) => (
            <button key={m} type="button" className="px-2">{m}</button>
          ))}
        </nav>

        <div className="flex h-[34px] shrink-0 overflow-hidden border-b border-[#a5a5b5]">
          <Group className="pl-[3px]">
            <Tool label="New"><NewIcon /></Tool>
            <Tool label="Open"><OpenIcon /></Tool>
            <Tool label="Save"><SaveIcon /></Tool>
            <Tool label="Print"><PrintIcon /></Tool>
            <Sep />
            <Tool label="Cut"><CutIcon /></Tool>
            <Tool label="Copy"><CopyIcon /></Tool>
            <Tool label="Paste"><PasteIcon /></Tool>
            <Sep />
            <Tool label="Undo"><UndoIcon /></Tool>
            <Caret label="Undo list" />
            <Tool label="Redo"><RedoIcon /></Tool>
            <Caret label="Redo list" faded />
            <Sep />
            <Tool label="Refresh"><RefreshIcon /></Tool>
            <Sep />
            <Tool label="What's this"><WhatsThisIcon /></Tool>
          </Group>
          <Group>
            <div className="relative flex items-center">
              <select
                aria-label="Workbench"
                className={`h-[22px] w-[146px] appearance-none rounded-[3px] border border-[#75767c] bg-linear-to-b from-[#f7f7f7] from-50% to-[#d9d9d9] to-50% pt-[2px] pl-[23px] text-[11px] ${TAHOMA}`}
              >
                <option>Assembly 3</option>
              </select>
              <span className="pointer-events-none absolute left-1 flex"><AssemblyIcon className="size-[17px]" /></span>
              <svg viewBox="0 0 7 4" className="pointer-events-none absolute right-[6px] h-1 w-[7px]"><path d="M0 0h7L3.500 4z" /></svg>
            </div>
          </Group>
          <Group>
            <Tool label="Record macro"><RecordIcon /></Tool>
            <Tool label="Stop macro"><StopIcon /></Tool>
            <Tool label="Macros"><MacroEditIcon /></Tool>
            <Tool label="Run macro"><PlayIcon /></Tool>
          </Group>
        </div>

        <div className="flex h-[34px] shrink-0 overflow-hidden border-b border-[#a5a5b5]">
          <Group className="pl-[3px]">
            <Tool label="Fit all"><FitAllIcon /></Tool>
            <Tool label="Fit selection"><FitSelIcon /></Tool>
            <Tool label="Draw style"><DrawStyleIcon /></Tool>
            <Caret label="Draw styles" />
            <Sep />
            <Tool label="Axonometric"><AxoIcon /></Tool>
            <Sep />
            <Tool label="Front"><CubeIcon face="front" /></Tool>
            <Tool label="Top"><CubeIcon face="top" /></Tool>
            <Tool label="Right"><CubeIcon face="right" /></Tool>
            <Sep />
            <Tool label="Rear"><CubeIcon face="rear" /></Tool>
            <Tool label="Bottom"><CubeIcon face="bottom" /></Tool>
            <Tool label="Left"><CubeIcon face="left" /></Tool>
            <Sep />
            <Tool label="Measure"><RulerIcon /></Tool>
          </Group>
          <Group>
            <Tool label="Create part"><PartIcon /></Tool>
            <Tool label="Create group"><GroupIcon /></Tool>
          </Group>
          <Group>
            <Tool label="Create assembly"><AssemblyIcon plus /></Tool>
            <Tool label="Solve constraints"><AssemblyIcon /></Tool>
            <Tool label="Move part"><MoveIcon /></Tool>
            <Tool label="Axial move"><AxialIcon /></Tool>
            <Tool label="Trace part"><TraceIcon /></Tool>
            <Tool label="Auto recompute" pressed><AutoRecomputeIcon /></Tool>
            <Tool label="Show elements" pressed><SmartRecomputeIcon /></Tool>
            <Tool label="Workplane"><WorkplaneIcon /></Tool>
            <Caret label="Workplanes" />
            <Tool label="Move item up"><TreeArrowIcon /></Tool>
            <Tool label="Move item down"><TreeArrowIcon down /></Tool>
          </Group>
          <Group className="w-[71px] pl-1">
            <Tool label="Lock"><LockIcon /></Tool>
            <More label="More constraints" />
          </Group>
          <Group className="w-[55px] pl-1">
            <Tool label="Coincident"><CoincidentIcon /></Tool>
            <More label="More tools" />
          </Group>
          <Group className="flex-1 pl-1">
            <Tool label="Plane"><RedPlaneIcon /></Tool>
            <More label="More planes" />
          </Group>
        </div>

        <div className="flex min-h-0 flex-1 pt-px">
          <SidePanel />
          <main className="ml-1 flex min-w-0 flex-1 flex-col">
            <Viewport />
            <div role="tablist" className={`flex h-6 shrink-0 items-start pl-[2px] text-[11px] ${TAHOMA}`}>
              <DocTab title="Start page" className="w-[111px] border-r-0 pr-3 pl-2" />
              <DocTab title="assembly_5-5-2018 : 1*" active className="w-[183px] pr-[14px] pl-3" />
              <DocTab title="assembly_reference_frame : 1" className="w-[210px] border-l-0 pr-3 pl-[10px]" />
              <DocTab title="bolt : 1" className="w-[96px] pr-3 pl-[10px]" />
            </div>
          </main>
        </div>

        <footer className={`flex h-[29px] shrink-0 items-center pl-px text-[11px] ${TAHOMA}`}>
          <p className="min-w-0 flex-1 truncate pt-[2px]">Preselected: assembly_5_5_2018.Assembly.Parts.Link.DatumPlane001. (14.7407, -23, -1.03534)</p>
          <button type="button" className="flex h-[26px] w-[81px] items-center border-l border-[#d0d0d0] pl-6">
            <svg viewBox="0 0 10 14" className="mr-[6px] h-[14px] w-[10px]" aria-hidden="true">
              <rect x="1" y="1" width="8" height="12" rx="3" fill="#fff" stroke="#333" strokeWidth="1.400" />
              <path d="M5 3v3" stroke="#333" strokeWidth="1.400" />
            </svg>
            <span className="pt-[2px]">CAD</span>
            <svg viewBox="0 0 7 4" className="ml-1 h-1 w-[7px]" aria-hidden="true"><path d="M0 0h7L3.500 4z" /></svg>
          </button>
          <span className="flex h-[26px] w-[132px] items-center border-x border-[#d0d0d0] pt-[2px] pl-[3px] whitespace-nowrap">180.23 mm x 151.59 mm</span>
          <svg viewBox="0 0 12 12" className="mt-4 ml-[3px] size-[10px]" aria-hidden="true">
            <path d="M9 1h2v2H9zM9 5h2v2H9zM9 9h2v2H9zM5 5h2v2H5zM5 9h2v2H5zM1 9h2v2H1z" fill="#c4c4c4" />
          </svg>
        </footer>
      </div>
    </div>
  );
}
